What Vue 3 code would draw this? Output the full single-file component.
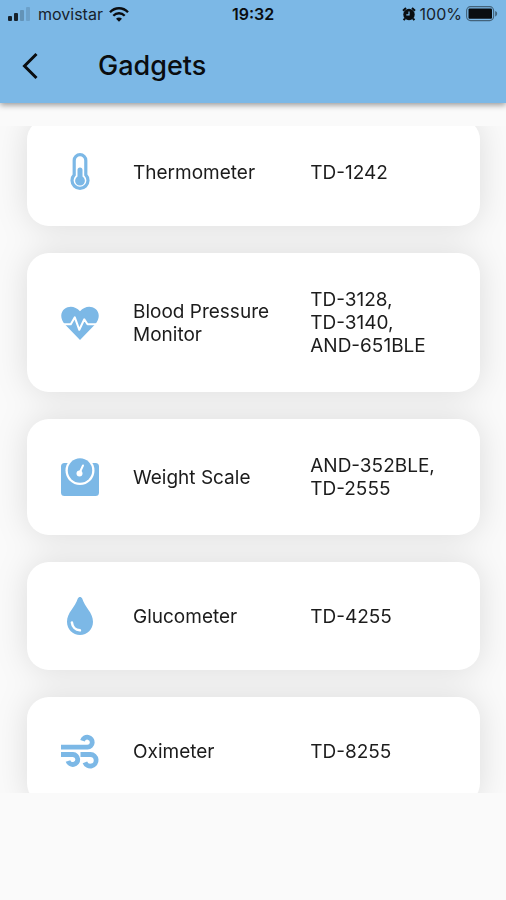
<script setup>
import { ref } from 'vue'

const gadgets = ref([
    { id: 'thermometer', name: 'Thermometer', models: ['TD-1242'] },
    { id: 'pressure', name: 'Blood Pressure Monitor', models: ['TD-3128', 'TD-3140', 'AND-651BLE'] },
    { id: 'scale', name: 'Weight Scale', models: ['AND-352BLE', 'TD-2555'] },
    { id: 'glucometer', name: 'Glucometer', models: ['TD-4255'] },
    { id: 'oximeter', name: 'Oximeter', models: ['TD-8255'] }
])

const goBack = () => window.history.back()
</script>

<template>
    <div class="screen">
        <header class="app-bar">
            <!-- status bar -->
            <div class="status-bar">
                <div class="status-left">
                    <svg class="signal" viewBox="0 0 24 14">
                        <rect x="0" y="9" width="4" height="5" rx="1" />
                        <rect x="6" y="6" width="4" height="8" rx="1" />
                        <rect x="12" y="3" width="4" height="11" rx="1" opacity="0.25" />
                        <rect x="18" y="0" width="4" height="14" rx="1" opacity="0.15" />
                    </svg>
                    <span>movistar</span>
                    <svg class="wifi" viewBox="0 0 20 15">
                        <g fill="none" stroke="currentColor" stroke-width="2.3">
                            <path d="M1 5.3C6-.1 14-.1 19 5.3" />
                            <path d="M4.3 8.7c3.2-3.3 8.2-3.3 11.4 0" />
                        </g>
                        <path d="M10 14.8l-3-3.1c1.7-1.6 4.3-1.6 6 0z" />
                    </svg>
                </div>
                <span class="clock">19:32</span>
                <div class="status-right">
                    <svg class="alarm" viewBox="0 0 14 14">
                        <path d="M1 3.7L4 1M13 3.7L10 1M3 11.5l-1.4 1.7M11 11.5l1.4 1.7" fill="none" stroke="currentColor" stroke-width="2" />
                        <circle cx="7" cy="7.5" r="5.7" />
                        <path d="M7 4.5v3.3H4.3" fill="none" stroke="#7cb8e6" stroke-width="1.2" />
                    </svg>
                    <span>100%</span>
                    <svg class="battery" viewBox="0 0 32 16">
                        <rect x="0.6" y="0.6" width="27" height="14" rx="4" fill="none" stroke="currentColor" stroke-width="1.1" opacity="0.5" />
                        <rect x="2.5" y="2.5" width="23.5" height="10.2" rx="1" />
                        <path d="M29.2 5c2.6.8 2.6 4.7 0 5.4z" opacity="0.5" />
                    </svg>
                </div>
            </div>

            <div class="toolbar">
                <button class="back" type="button" aria-label="Back" @click="goBack">
                    <svg viewBox="0 0 20 28">
                        <path d="M16.5 2L4.5 14l12 12" fill="none" stroke="currentColor" stroke-width="3" />
                    </svg>
                </button>
                <h1 class="title">Gadgets</h1>
            </div>
        </header>

        <main class="content">
            <ul class="gadget-list">
                <li v-for="gadget in gadgets" :key="gadget.id" class="card">
                    <svg v-if="gadget.id === 'thermometer'" class="icon" viewBox="0 0 38 38">
                        <path d="M13.2 7.4a5.8 5.8 0 0 1 11.6 0v14.4a8 8 0 1 1-11.6 0z" fill="none" stroke="currentColor" stroke-width="3.2" />
                        <path d="M16.5 17a2.5 2.5 0 0 1 5 0v6.500a4.900 4.900 0 1 1-5 0z" />
                    </svg>
                    <svg v-else-if="gadget.id === 'pressure'" class="icon" viewBox="0 0 38 38">
                        <path d="M19 36L4 20.5C-1.5 14.3-.3 8 3.4 5 8.4 1 14.6 2.4 19 7.2 23.4 2.4 29.6 1 34.6 5c3.7 3 4.9 9.3-.6 15.5z" />
                        <path d="M0 20.3h9.8l4-7 4.5 12.5 5-10.5 3.2 5H38" fill="none" stroke="#fff" stroke-width="2" stroke-linejoin="round" />
                    </svg>
                    <svg v-else-if="gadget.id === 'scale'" class="icon" viewBox="0 0 38 38">
                        <path d="M3.5 5h31A3.5 3.5 0 0 1 38 8.5v26a3.5 3.5 0 0 1-3.5 3.5h-31A3.5 3.5 0 0 1 0 34.5v-26A3.5 3.5 0 0 1 3.5 5z" />
                        <circle cx="19" cy="12.5" r="14.5" fill="#fff" />
                        <circle cx="19" cy="12.5" r="12.2" />
                        <circle cx="18.5" cy="15.5" r="3" fill="#fff" />
                        <path d="M18.5 15L22 7.5" fill="none" stroke="#fff" stroke-width="2" stroke-linecap="round" />
                    </svg>
                    <svg v-else-if="gadget.id === 'glucometer'" class="icon" viewBox="0 0 38 38">
                        <path d="M16.8 1.6c.7-2.1 3.7-2.1 4.4 0C23.7 10 32 15.8 32 24.8 32 32.3 26.2 38 19 38S6 32.3 6 24.8C6 15.8 14.3 10 16.8 1.6z" />
                        <path d="M10.9 25.5c.4 4.3 3.6 7.4 8 7.8" fill="none" stroke="#fff" stroke-width="2.6" stroke-linecap="round" />
                    </svg>
                    <svg v-else class="icon" viewBox="0 0 38 38">
                        <g fill="none" stroke="currentColor" stroke-width="4.8">
                            <path d="M0 15.2h26.5a5 5 0 1 0-5-6.5" />
                            <path d="M0 22.5h12a5 5 0 1 1-5 6.5" />
                            <path d="M19.5 22.5h10a5.8 5.8 0 1 1-5.6 7.8" />
                        </g>
                    </svg>
                    <span class="name">{{ gadget.name }}</span>
                    <span class="models">
                        <template v-for="(model, i) in gadget.models" :key="model">
                            <span class="model">{{ model }}{{ i < gadget.models.length - 1 ? ',' : '' }}</span>{{ ' ' }}
                        </template>
                    </span>
                </li>
            </ul>
        </main>
    </div>
</template>

<style>
body {
    background: #fafafa;
}
</style>

<style scoped>
.screen {
    display: flex;
    flex-direction: column;
    height: 100vh;
    background: #fafafa;
    color: #1c1c1c;
    font-family: Inter, Roboto, sans-serif;
}

svg {
    display: block;
    fill: currentColor;
    flex-shrink: 0;
}

.app-bar {
    background: #7cb8e6;
    color: #0a0d10;
    box-shadow: 0 2px 6px rgba(0, 0, 0, 0.4);
}

.status-bar {
    display: grid;
    grid-template-columns: 1fr auto 1fr;
    align-items: center;
    height: 28px;
    padding: 0 8px;
    font-size: 16px;
}

.status-left,
.status-right {
    display: flex;
    align-items: center;
    gap: 6px;
    color: #17222c;
}

.status-right {
    justify-content: flex-end;
    gap: 4px;
}

.signal {
    width: 24px;
    height: 14px;
}

.wifi {
    width: 20px;
    height: 15px;
    color: #0a0d10;
}

.alarm {
    width: 14px;
    height: 14px;
    color: #0a0d10;
}

.battery {
    width: 32px;
    height: 16px;
    color: #0a0d10;
}

.clock {
    font-weight: 600;
}

.toolbar {
    display: flex;
    align-items: center;
    height: 75px;
    padding: 0 20px;
    gap: 58px;
}

.back {
    padding: 0;
    border: 0;
    background: none;
    color: inherit;
    cursor: pointer;

    svg {
        width: 20px;
        height: 28px;
    }
}

.title {
    margin: 0;
    font-size: 27px;
    font-weight: 500;
}

.content {
    flex: 1;
    min-height: 0;
    margin: 23px 0 107px;
    overflow-y: auto;
    scrollbar-width: none;
}

/* one shadow for the whole stack, so cards don't shade each other */
.gadget-list {
    display: flex;
    flex-direction: column;
    gap: 27px;
    margin: -8px 0 0;
    padding: 0 26px 27px 27px;
    list-style: none;
    filter: drop-shadow(0 0 16px rgba(0, 0, 0, 0.12));
}

.card {
    display: grid;
    grid-template-columns: 38px 14fr 9fr;
    align-items: center;
    padding: 35px 34px;
    border-radius: 22px;
    background: #fff;
    font-size: 19px;
    line-height: 23px;
}

.icon {
    width: 38px;
    height: 38px;
    color: #7cb8e6;
}

.name {
    padding: 0 34px;
}

.model {
    white-space: nowrap;
}
</style>
